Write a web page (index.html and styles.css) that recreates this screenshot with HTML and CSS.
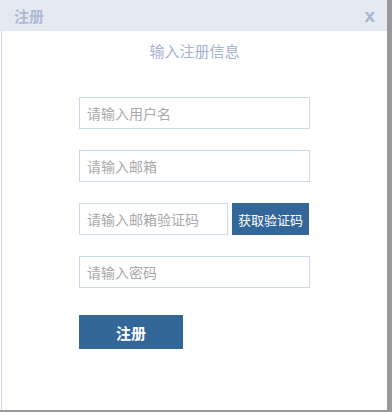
FILE: index.html
```html
<!DOCTYPE html>
<html lang="zh-CN">
<head>
<meta charset="UTF-8" />
<meta name="viewport" content="width=device-width, initial-scale=1" />
<title>注册</title>
<link rel="stylesheet" href="styles.css">
</head>
<body>

  <div class="dialog">
    <div class="dialog-head">
      <span class="dialog-title">注册</span>
      <span class="dialog-close">x</span>
    </div>
    <div class="dialog-body">
      <p class="subtitle">输入注册信息</p>
      <form class="reg-form" onsubmit="return false;">
        <input class="field" type="text" placeholder="请输入用户名" />
        <input class="field" type="text" placeholder="请输入邮箱" />
        <div class="code-row">
          <input class="field field-short" type="text" placeholder="请输入邮箱验证码" />
          <button type="button" class="code-btn">获取验证码</button>
        </div>
        <input class="field" type="password" placeholder="请输入密码" />
        <button type="submit" class="submit-btn">注册</button>
      </form>
    </div>
  </div>

</body>
</html>
```

FILE: styles.css
```css
body {
  margin: 0;
  background: #999;
  font-family: "Noto Sans CJK SC", "Liberation Sans", sans-serif;
  width: 392px;
  height: 412px;
  overflow: hidden;
}

.dialog {
  width: 387px;
  height: 410px;
  background: #fff;
  display: flex;
  flex-direction: column;
}

/* Cabecera */
.dialog-head {
  height: 31px;
  background: #e5eaf2;
  padding: 0 12px 0 14px;
  display: flex;
  align-items: center;
  justify-content: space-between;
}
.dialog-title {
  font-size: 15px;
  font-weight: 700;
  color: #adbad6;
  line-height: 31px;
}
.dialog-close {
  font-family: "Liberation Sans", sans-serif;
  font-size: 19px;
  font-weight: 700;
  color: #a7b5d2;
  line-height: 31px;
}

/* Cuerpo */
.dialog-body {
  flex: 1;
  margin-left: 1px;
  border-left: 1px solid #cfdbea;
}
.subtitle {
  margin: 10px 0 0 0;
  text-align: center;
  font-size: 15px;
  line-height: 20px;
  color: #a6b2d0;
}

.reg-form {
  margin-top: 36px;
  padding-left: 77px;
  display: flex;
  flex-direction: column;
  align-items: flex-start;
}
.field {
  box-sizing: border-box;
  width: 231px;
  height: 32px;
  margin: 0 0 21px 0;
  padding: 0 7px;
  border: 1px solid #cbd9ea;
  font-family: inherit;
  font-size: 14px;
  color: #333;
  outline: none;
}
.field::placeholder {
  color: #a9a9a9;
}
.code-row {
  display: flex;
  gap: 4px;
  margin-bottom: 21px;
}
.code-row .field {
  margin: 0;
}
.field-short {
  width: 149px;
}
.code-btn {
  width: 77px;
  height: 32px;
  border: none;
  padding: 0;
  background: #336699;
  color: #fff;
  font-family: inherit;
  font-size: 13px;
  cursor: pointer;
}
.submit-btn {
  margin-top: 6px;
  width: 104px;
  height: 34px;
  border: none;
  background: #336699;
  color: #fff;
  font-family: inherit;
  font-size: 15px;
  font-weight: 700;
  cursor: pointer;
}
```
